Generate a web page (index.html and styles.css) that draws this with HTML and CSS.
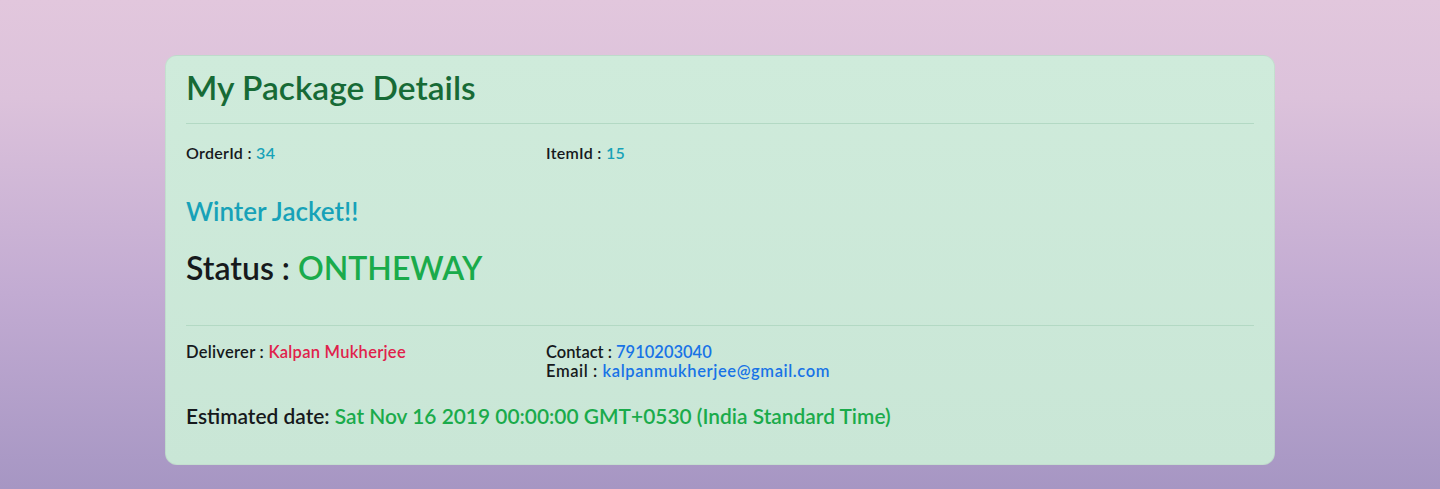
FILE: index.html
```html
<!DOCTYPE html>
<html lang="en">
<head>
<meta charset="utf-8">
<title>My Package Details</title>
<link rel="stylesheet" href="styles.css">
</head>
<body>
<main class="page">
  <section class="card">
    <h2 class="title">My Package Details</h2>
    <hr class="rule rule-top">
    <div class="pair-row ids">
      <div class="field">OrderId : <span class="info">34</span></div>
      <div class="field">ItemId : <span class="info">15</span></div>
    </div>
    <h4 class="item-name">Winter Jacket!!</h4>
    <h2 class="status">Status : <span class="ok">ONTHEWAY</span></h2>
    <hr class="rule rule-bottom">
    <div class="pair-row people">
      <div class="field deliverer">Deliverer : <span class="danger">Kalpan Mukherjee</span></div>
      <div class="contact">
        <div class="field phone">Contact : <span class="primary">7910203040</span></div>
        <div class="field email">Email : <span class="primary">kalpanmukherjee@gmail.com</span></div>
      </div>
    </div>
    <h5 class="eta">Estimated date: <span class="ok">Sat Nov 16 2019 00:00:00 GMT+0530 (India Standard Time)</span></h5>
  </section>
</main>
</body>
</html>
```
FILE: styles.css
```css
* { box-sizing: border-box; }
html, body { margin: 0; height: 100%; }
body {
  font-family: Lato, "Noto Sans", sans-serif;
  color: #16191c;
  background: linear-gradient(180deg, #e2c7dd 0%, #dcc2db 20%, #c2abd2 60%, #a696c3 100%);
  min-height: 489px;
}
.page {
  padding-top: 55px;
  display: flex;
  justify-content: center;
}
.card {
  width: 1110px;
  background: linear-gradient(180deg, #cfebdb 0%, #c9e6d6 100%);
  border: 1px solid rgba(0,0,0,0.05);
  border-radius: 12px;
  padding: 10px 20px 34px;
}
.title {
  margin: 0;
  font-size: 33.5px;
  line-height: 43px;
  font-weight: 600;
  color: #176a36;
}
.rule {
  border: 0;
  border-top: 1px solid #b3d9c4;
  margin: 0;
}
.rule-top { margin-top: 14px; }
.pair-row {
  display: grid;
  grid-template-columns: 360px 1fr;
}
.ids { margin-top: 17px; }
.field {
  font-size: 16.5px;
  font-weight: 600;
  line-height: 19px;
}
.deliverer { letter-spacing: 0.27px; }
.phone { letter-spacing: 0; }
.email { letter-spacing: 0.6px; }
.ids .field {
  font-size: 16px;
  line-height: 24px;
  letter-spacing: 0.3px;
}
.info { color: #17a2b8; }
.item-name {
  margin: 31px 0 0;
  font-size: 26px;
  line-height: 30px;
  font-weight: 600;
  color: #17a2b8;
}
.status {
  margin: 20px 0 0;
  font-size: 32px;
  line-height: 43px;
  font-weight: 600;
  color: #16191c;
}
.ok { color: #1aab4b; }
.rule-bottom { margin-top: 36px; }
.people { margin-top: 17px; }
.danger { color: #e0224b; }
.primary { color: #1873e6; }
.eta {
  margin: 21px 0 0;
  font-size: 20.9px;
  line-height: 28px;
  font-weight: 600;
}
```
